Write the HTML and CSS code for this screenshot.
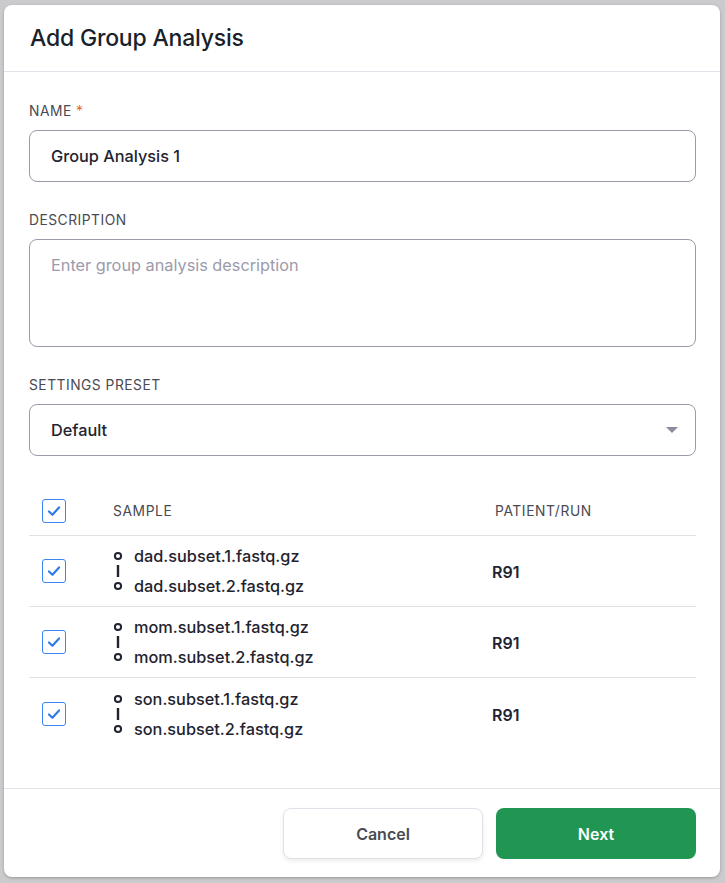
FILE: index.html
```html
<!DOCTYPE html>
<html>
<head>
<meta charset="utf-8">
<link rel="stylesheet" href="styles.css">
</head>
<body>
<div class="modal">
  <header class="modal-header">
    <h1 class="title">Add Group Analysis</h1>
  </header>
  <main class="modal-body">
    <div class="field">
      <label class="label">NAME <span class="req">*</span></label>
      <div class="input">Group Analysis 1</div>
    </div>
    <div class="field">
      <label class="label">DESCRIPTION</label>
      <div class="textarea">Enter group analysis description</div>
    </div>
    <div class="field">
      <label class="label">SETTINGS PRESET</label>
      <div class="input select"><span>Default</span><span class="caret"></span></div>
    </div>
    <div class="table">
      <div class="row head">
        <div class="cell-check"><span class="cb"><svg viewBox="0 0 24 24"><path d="M6.5 12.5l3.8 3.6 7.2-8" /></svg></span></div>
        <div class="th">SAMPLE</div>
        <div class="th">PATIENT/RUN</div>
      </div>
      <div class="row">
        <div class="cell-check"><span class="cb"><svg viewBox="0 0 24 24"><path d="M6.5 12.5l3.8 3.6 7.2-8" /></svg></span></div>
        <div class="sample">
          <svg class="pair" viewBox="0 0 10 40"><circle cx="5" cy="5" r="3.1"/><line x1="5" y1="14" x2="5" y2="26"/><circle cx="5" cy="35" r="3.1"/></svg>
          <div class="files"><div>dad.subset.1.fastq.gz</div><div>dad.subset.2.fastq.gz</div></div>
        </div>
        <div class="run">R91</div>
      </div>
      <div class="row">
        <div class="cell-check"><span class="cb"><svg viewBox="0 0 24 24"><path d="M6.5 12.5l3.8 3.6 7.2-8" /></svg></span></div>
        <div class="sample">
          <svg class="pair" viewBox="0 0 10 40"><circle cx="5" cy="5" r="3.1"/><line x1="5" y1="14" x2="5" y2="26"/><circle cx="5" cy="35" r="3.1"/></svg>
          <div class="files"><div>mom.subset.1.fastq.gz</div><div>mom.subset.2.fastq.gz</div></div>
        </div>
        <div class="run">R91</div>
      </div>
      <div class="row last">
        <div class="cell-check"><span class="cb"><svg viewBox="0 0 24 24"><path d="M6.5 12.5l3.8 3.6 7.2-8" /></svg></span></div>
        <div class="sample">
          <svg class="pair" viewBox="0 0 10 40"><circle cx="5" cy="5" r="3.1"/><line x1="5" y1="14" x2="5" y2="26"/><circle cx="5" cy="35" r="3.1"/></svg>
          <div class="files"><div>son.subset.1.fastq.gz</div><div>son.subset.2.fastq.gz</div></div>
        </div>
        <div class="run">R91</div>
      </div>
    </div>
  </main>
  <footer class="modal-footer">
    <button class="btn cancel">Cancel</button>
    <button class="btn next">Next</button>
  </footer>
</div>
</body>
</html>
```
FILE: styles.css
```css
html, body {
  margin: 0;
  padding: 0;
}
body {
  background: #cbcbcd;
  font-family: Inter, "Noto Sans", sans-serif;
  color: #1f2430;
  width: 725px;
  height: 883px;
  overflow: hidden;
}
.modal {
  margin: 5px 0 0 4px;
  width: 716px;
  height: 872px;
  background: #fff;
  border-radius: 8px;
  display: flex;
  flex-direction: column;
  box-shadow: 0 1px 3px rgba(0,0,0,0.25);
}
.modal-header {
  height: 67px;
  box-sizing: border-box;
  border-bottom: 1px solid #e2e2ea;
  display: flex;
  align-items: center;
  padding: 0 26px;
}
.title {
  margin: 0;
  font-size: 23px;
  font-weight: 500;
  letter-spacing: -0.2px;
  color: #1a1f2b;
}
.modal-body {
  flex: 1;
  padding: 31px 24px 0 25px;
}
.field {
  margin-bottom: 30px;
}
.label {
  display: block;
  font-size: 13.8px;
  line-height: 16px;
  letter-spacing: 0.5px;
  color: #4a4a52;
  margin-bottom: 11px;
}
.req {
  color: #ea6a3c;
}
.input, .textarea {
  box-sizing: border-box;
  border: 1px solid #9a9aaa;
  border-radius: 8px;
  font-size: 16.3px;
  font-weight: 500;
  color: #1f2430;
  padding: 0 21px;
}
.input {
  height: 52px;
  display: flex;
  align-items: center;
}
.textarea {
  height: 108px;
  padding-top: 15px;
  color: #9b9bab;
  font-weight: 400;
}
.select {
  justify-content: space-between;
  padding-right: 17px;
}
.caret {
  width: 0;
  height: 0;
  border-left: 6px solid transparent;
  border-right: 6px solid transparent;
  border-top: 6px solid #8c8c9c;
}
.row {
  display: grid;
  grid-template-columns: 84px 382px 1fr;
  align-items: center;
  height: 71px;
  border-bottom: 1px solid #e2e2e6;
  box-sizing: border-box;
}
.row.head {
  height: 50px;
}
.row.last {
  border-bottom: none;
}
.cell-check {
  padding-left: 13px;
  display: flex;
}
.cb {
  width: 24px;
  height: 24px;
  box-sizing: border-box;
  border: 1.5px solid #3b86f0;
  border-radius: 3px;
  display: flex;
  align-items: center;
  justify-content: center;
}
.cb svg {
  width: 22px;
  height: 22px;
  fill: none;
  stroke: #2f7ce8;
  stroke-width: 2.4;
  stroke-linecap: round;
  stroke-linejoin: round;
}
.th {
  font-size: 13.8px;
  letter-spacing: 0.6px;
  color: #4a4a52;
}
.sample {
  display: flex;
  align-items: center;
  gap: 11px;
}
.pair {
  width: 10px;
  height: 40px;
  fill: none;
  stroke: #1f2430;
  stroke-width: 2;
}
.pair line {
  stroke-width: 2.4;
}
.files {
  font-size: 16.3px;
  font-weight: 500;
  line-height: 30px;
  color: #1f2430;
}
.run {
  font-size: 16px;
  font-weight: 600;
  color: #1f2430;
  margin-left: -3px;
  padding-top: 2px;
}
.modal-footer {
  height: 89px;
  box-sizing: border-box;
  border-top: 1px solid #e2e2ea;
  display: flex;
  justify-content: flex-end;
  align-items: flex-start;
  gap: 13px;
  padding: 19px 24px 0 0;
}
.btn {
  width: 200px;
  height: 51px;
  border-radius: 8px;
  font-family: Inter, "Noto Sans", sans-serif;
  font-size: 16px;
  font-weight: 600;
  cursor: pointer;
}
.cancel {
  background: #fff;
  border: 1px solid #e1e1ea;
  color: #4a4a52;
  box-shadow: 0 2px 4px rgba(0,0,0,0.08);
}
.next {
  background: #219653;
  border: none;
  color: #fff;
}
```
